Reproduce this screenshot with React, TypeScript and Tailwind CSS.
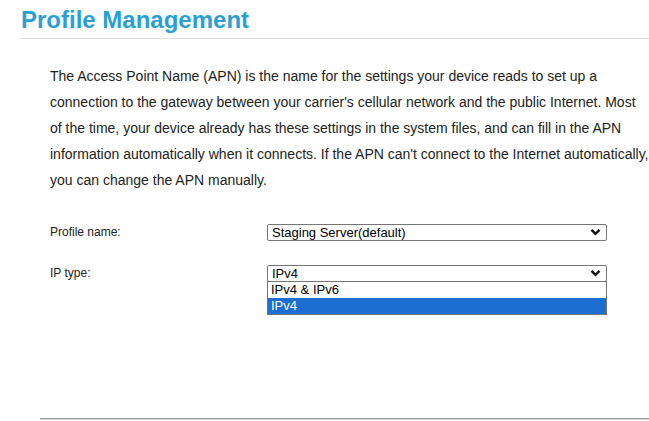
import React from "react";

function Chevron() {
  return (
    <svg width="11" height="8" viewBox="0 0 11 8" className="shrink-0">
      <path d="M1.5 1.8 L5.5 5.8 L9.5 1.8" fill="none" stroke="#111" strokeWidth="2.4" />
    </svg>
  );
}

function SelectBox({ value, children }: { value: string; children?: React.ReactNode }) {
  return (
    <div className="relative w-[340px]">
      <div className="flex h-[17px] items-center justify-between rounded-[2px] border border-[#767676] bg-white pl-[4px] pr-[5px] text-[13px] leading-none text-black">
        <span>{value}</span>
        <Chevron />
      </div>
      {children}
    </div>
  );
}

export default function App() {
  const options = ["IPv4 & IPv6", "IPv4"];
  return (
    <div className="min-h-[421px] w-[649px] bg-white font-['Liberation_Sans',Arial,sans-serif] text-[#222]">
      <div className="pl-[20px] pt-[5px]">
        <h1 className="border-b border-[#e2e2e2] pb-[4px] pl-[1px] text-[24px] font-bold leading-[29px] text-[#2a9fd6]">
          Profile Management
        </h1>
      </div>
      <p className="ml-[50px] mt-[24px] w-[600px] text-[14px] leading-[26px] text-[#222]">
        The Access Point Name (APN) is the name for the settings your device reads to set up a connection to the
        gateway between your carrier's cellular network and the public Internet. Most of the time, your device
        already has these settings in the system files, and can fill in the APN information automatically when it
        connects. If the APN can't connect to the Internet automatically, you can change the APN manually.
      </p>
      <div className="ml-[50px] mt-[30px] flex flex-col gap-[23px]">
        <div className="flex items-center">
          <span className="w-[217px] text-[12px] text-[#222]">Profile name:</span>
          <SelectBox value="Staging Server(default)" />
        </div>
        <div className="flex items-center">
          <span className="w-[217px] text-[12px] text-[#222]">IP type:</span>
          <SelectBox value="IPv4">
            <ul className="absolute left-0 top-[16px] z-10 w-[340px] border border-[#767676] bg-white text-[13px] leading-[16px] text-black">
              {options.map((o) => (
                <li
                  key={o}
                  className={
                    o === "IPv4"
                      ? "bg-[#1c6ed0] pl-[3px] text-white"
                      : "pl-[3px]"
                  }
                >
                  {o}
                </li>
              ))}
            </ul>
          </SelectBox>
        </div>
      </div>
      <div className="ml-[40px] mt-[136px] h-[2px] border-t border-[#9a9a9a] bg-[#d8d8d8]" />
    </div>
  );
}
